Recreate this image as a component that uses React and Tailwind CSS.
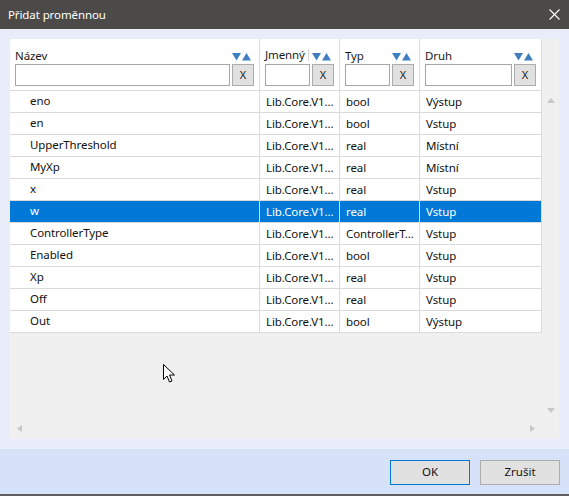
import React from 'react';

const rows = [
    { name: 'eno', ns: 'Lib.Core.V1...', type: 'bool', kind: 'Výstup' },
    { name: 'en', ns: 'Lib.Core.V1...', type: 'bool', kind: 'Vstup' },
    { name: 'UpperThreshold', ns: 'Lib.Core.V1...', type: 'real', kind: 'Místní' },
    { name: 'MyXp', ns: 'Lib.Core.V1...', type: 'real', kind: 'Místní' },
    { name: 'x', ns: 'Lib.Core.V1...', type: 'real', kind: 'Vstup' },
    { name: 'w', ns: 'Lib.Core.V1...', type: 'real', kind: 'Vstup', selected: true },
    { name: 'ControllerType', ns: 'Lib.Core.V1...', type: 'ControllerT...', kind: 'Vstup' },
    { name: 'Enabled', ns: 'Lib.Core.V1...', type: 'bool', kind: 'Vstup' },
    { name: 'Xp', ns: 'Lib.Core.V1...', type: 'real', kind: 'Vstup' },
    { name: 'Off', ns: 'Lib.Core.V1...', type: 'real', kind: 'Vstup' },
    { name: 'Out', ns: 'Lib.Core.V1...', type: 'bool', kind: 'Výstup' },
];

const SortArrows = () => (
    <svg width="19" height="8" viewBox="0 0 19 8" className="shrink-0">
        <polygon points="0,0 9,0 4.5,7.5" fill="#3f7fbf" />
        <polygon points="10,7.5 19,7.5 14.5,0" fill="#3f7fbf" />
    </svg>
);

const HeaderCell = ({ label, width, divider }) => (
    <div className={`${width} shrink-0 border-r border-[#dadada] pl-[5px] pr-[5px] flex flex-col`}>
        <div className="h-[25px] flex items-end pb-[3px] justify-between pr-[3px]">
            <span className="flex items-center text-[11.5px] tracking-[-0.1px] text-[#1a1a1a] leading-none">
                {label}
                {divider && <span className="ml-[3px] w-px h-[12px] bg-[#d8d8d8]" />}
            </span>
            <SortArrows />
        </div>
        <div className="flex gap-[2px] h-[22px]">
            <div className="flex-1 border border-[#a6a6a6] bg-white" />
            <button className="w-[22px] h-[22px] border border-[#adadad] bg-[#e1e1e1] text-[11px] text-[#1a1a1a] flex items-center justify-center">
                X
            </button>
        </div>
    </div>
);

const App = () => {
    return (
        <div className="w-[569px] h-[496px] flex flex-col overflow-hidden relative" style={{ fontFamily: '"Noto Sans", "Open Sans", sans-serif' }}>
            {/* title bar */}
            <div className="h-[29px] shrink-0 bg-[#4b4a48] flex items-center justify-between pl-[8px] pr-[9px]">
                <span className="text-white text-[11.5px] tracking-[-0.1px]">Přidat proměnnou</span>
                <svg width="11" height="11" viewBox="0 0 11 11">
                    <path d="M0.5 0.5 L10.5 10.5 M10.5 0.5 L0.5 10.5" stroke="#ffffff" strokeWidth="1.1" />
                </svg>
            </div>

            {/* body */}
            <div className="flex-1 bg-[#e9edf9] px-[10px] pt-[10px] pb-[10px] flex flex-col">
                <div className="flex-1 bg-[#f0f0f0] flex flex-col">
                    <div className="flex flex-1">
                        <div className="w-[532px] shrink-0 flex flex-col">
                            <div className="flex h-[52px] bg-white border-b border-[#dadada]">
                                <HeaderCell label="Název" width="w-[250px]" />
                                <HeaderCell label="Jmenný" width="w-[80px]" divider />
                                <HeaderCell label="Typ" width="w-[80px]" />
                                <HeaderCell label="Druh" width="w-[122px]" />
                            </div>
                            {rows.map((r) => (
                                <div
                                    key={r.name}
                                    className={`flex h-[22px] border-b border-[#dadada] text-[11.5px] tracking-[-0.1px] leading-none ${r.selected ? 'bg-[#0078d7] text-white' : 'bg-white text-[#111]'}`}
                                >
                                    <div className="w-[250px] shrink-0 border-r border-[#dadada] pl-[20px] pb-[2px] flex items-center">{r.name}</div>
                                    <div className="w-[80px] shrink-0 border-r border-[#dadada] pl-[6px] pt-[1px] flex items-center whitespace-nowrap overflow-hidden">{r.ns}</div>
                                    <div className="w-[80px] shrink-0 border-r border-[#dadada] pl-[6px] pt-[1px] flex items-center whitespace-nowrap overflow-hidden">{r.type}</div>
                                    <div className="w-[122px] shrink-0 border-r border-[#dadada] pl-[6px] pt-[1px] flex items-center">{r.kind}</div>
                                </div>
                            ))}
                        </div>
                        {/* vertical scrollbar */}
                        <div className="flex-1 flex flex-col justify-between items-center pt-[59px] pb-[6px] pl-[1px]">
                            <svg width="8" height="5" viewBox="0 0 8 5"><polygon points="0,5 8,5 4,0" fill="#c8c8c8" /></svg>
                            <svg width="8" height="5" viewBox="0 0 8 5"><polygon points="0,0 8,0 4,5" fill="#c8c8c8" /></svg>
                        </div>
                    </div>
                    {/* horizontal scrollbar */}
                    <div className="h-[20px] shrink-0 flex items-center justify-between pl-[7px] pr-[24px] pb-[2px]">
                        <svg width="5" height="7" viewBox="0 0 5 7"><polygon points="5,0 5,7 0,3.5" fill="#c8c8c8" /></svg>
                        <svg width="5" height="7" viewBox="0 0 5 7"><polygon points="0,0 0,7 5,3.5" fill="#c8c8c8" /></svg>
                    </div>
                </div>
            </div>

            {/* footer */}
            <div className="h-[45px] shrink-0 bg-[#d6e2f7] flex items-center justify-end gap-[10px] pr-[9px] pt-[1px]">
                <button className="w-[80px] h-[25px] bg-[#e1e1e1] border border-[#0078d7] text-[11.5px] text-[#111]">OK</button>
                <button className="w-[80px] h-[25px] bg-[#e1e1e1] border border-[#adadad] text-[11.5px] text-[#111]">Zrušit</button>
            </div>
            <div className="h-[2px] shrink-0 bg-[#5f5f5f]" />

            {/* mouse cursor */}
            <svg className="absolute left-[163px] top-[364px]" width="13" height="20" viewBox="0 0 13 20">
                <path d="M0.5 0.5 L0.5 15.5 L4 12 L6.5 18 L9 17 L6.5 11 L11.5 11 Z" fill="#ffffff" stroke="#000000" strokeWidth="1" strokeLinejoin="round" />
            </svg>
        </div>
    );
};

export default App;
